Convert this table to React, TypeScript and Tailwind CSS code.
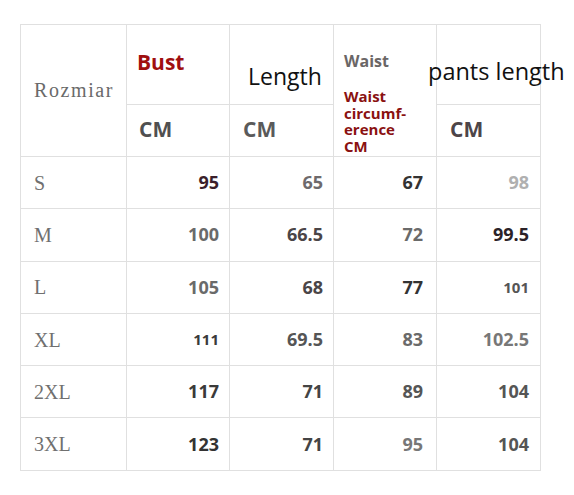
import React from "react";

type Cell = { v: string; c: string; small?: boolean };

const ROWS: { size: string; cells: Cell[] }[] = [
  {
    size: "S",
    cells: [
      { v: "95", c: "text-[#3b1f2b]" },
      { v: "65", c: "text-[#6e6a6c]" },
      { v: "67", c: "text-[#333333]" },
      { v: "98", c: "text-[#b0b0b0]" },
    ],
  },
  {
    size: "M",
    cells: [
      { v: "100", c: "text-[#6a6a6a]" },
      { v: "66.5", c: "text-[#4a4547]" },
      { v: "72", c: "text-[#6a6a6a]" },
      { v: "99.5", c: "text-[#2b2228]" },
    ],
  },
  {
    size: "L",
    cells: [
      { v: "105", c: "text-[#6a6a6a]" },
      { v: "68", c: "text-[#4a4547]" },
      { v: "77", c: "text-[#333333]" },
      { v: "101", c: "text-[#555555]", small: true },
    ],
  },
  {
    size: "XL",
    cells: [
      { v: "111", c: "text-[#3a3a3a]", small: true },
      { v: "69.5", c: "text-[#555555]" },
      { v: "83", c: "text-[#6a6a6a]" },
      { v: "102.5", c: "text-[#777777]" },
    ],
  },
  {
    size: "2XL",
    cells: [
      { v: "117", c: "text-[#3a3a3a]" },
      { v: "71", c: "text-[#444444]" },
      { v: "89", c: "text-[#555555]" },
      { v: "104", c: "text-[#555555]" },
    ],
  },
  {
    size: "3XL",
    cells: [
      { v: "123", c: "text-[#333333]" },
      { v: "71", c: "text-[#444444]" },
      { v: "95", c: "text-[#777777]" },
      { v: "104", c: "text-[#555555]" },
    ],
  },
];

// right padding per data column
const PAD = ["pr-[10px]", "pr-[10px]", "pr-[13px]", "pr-[11px]"];

const cell = "border-r border-b border-[#e0e0e0]";

export default function App() {
  return (
    <div className="w-[574px] h-[495px] bg-white font-['Open_Sans',sans-serif] pt-[24px] pl-[20px]">
      <div className="w-fit grid grid-cols-[106px_103px_104px_103px_104px] grid-rows-[80px_52px_repeat(6,52.3px)] border-l border-t border-[#e0e0e0]">
        {/* header */}
        <div className={`${cell} row-span-2 flex items-center pl-[13px] pb-[2px]`}>
          <span className="font-['Liberation_Serif',serif] text-[20px] tracking-[1.6px] text-[#6a6a6a]">
            Rozmiar
          </span>
        </div>
        <div className={`${cell} pl-[10px] pt-[27px]`}>
          <div className="text-[21px] leading-none font-bold text-[#a00f0f]">Bust</div>
        </div>
        <div className={`${cell} pl-[18px] pt-[40px]`}>
          <div className="text-[23px] leading-none text-[#111111]">Length</div>
        </div>
        <div className={`${cell} row-span-2 pl-[10px] pt-[28px] flex flex-col`}>
          <div className="text-[16px] leading-none font-bold text-[#6a6666]">Waist</div>
          <div className="mt-[19px] text-[15px] leading-[16.7px] font-bold text-[#8a1111]">
            Waist
            <br />
            circumf-
            <br />
            erence
            <br />
            CM
          </div>
        </div>
        <div className={`${cell} pt-[35px]`}>
          <div className="-ml-[9px] whitespace-nowrap text-[23.5px] leading-none text-[#111111]">
            pants length
          </div>
        </div>
        <div className={`${cell} flex items-center pl-[12px] pb-[2px]`}>
          <span className="text-[21px] font-bold text-[#505050]">CM</span>
        </div>
        <div className={`${cell} flex items-center pl-[13px] pb-[2px]`}>
          <span className="text-[21px] font-bold text-[#5a5a5a]">CM</span>
        </div>
        <div className={`${cell} flex items-center pl-[13px] pb-[2px]`}>
          <span className="text-[21px] font-bold text-[#4d4548]">CM</span>
        </div>

        {/* rows */}
        {ROWS.map((r) => (
          <React.Fragment key={r.size}>
            <div className={`${cell} flex items-center pl-[13px]`}>
              <span className="font-['Liberation_Serif',serif] text-[20px] text-[#707070]">
                {r.size}
              </span>
            </div>
            {r.cells.map((c, i) => (
              <div key={i} className={`${cell} flex items-center justify-end ${PAD[i]}`}>
                <span className={`font-bold ${c.small ? "text-[15px]" : "text-[18px]"} ${c.c}`}>
                  {c.v}
                </span>
              </div>
            ))}
          </React.Fragment>
        ))}
      </div>
    </div>
  );
}
